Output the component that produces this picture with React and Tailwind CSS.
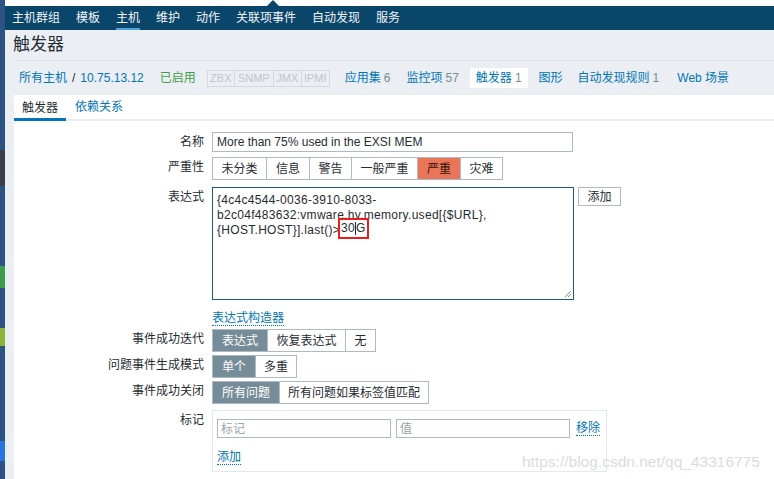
const navItems = ['主机群组', '模板', '主机', '维护', '动作', '关联项事件', '自动发现', '服务'];

function Segmented({ items, active, activeClass = 'bg-[#768d99] text-white' }) {
  return (
    <div className="flex h-[23px]">
      {items.map(([label, w], i) => (
        <div
          key={label}
          style={{ width: w }}
          className={
            'flex items-center justify-center border border-[#acbbc2] text-[12px] ' +
            (i > 0 ? '-ml-px ' : '') +
            (label === active ? activeClass : 'bg-white text-[#1f2c33]')
          }
        >
          {label}
        </div>
      ))}
    </div>
  );
}

function Row({ label, children, className = '' }) {
  return (
    <div className={'flex ' + className}>
      <div className="w-[198px] shrink-0 pr-[8px] text-right text-[12px] text-[#1f2c33] leading-[20px]">{label}</div>
      <div className="flex-1">{children}</div>
    </div>
  );
}

function Link({ children, className = '' }) {
  return (
    <span className={'text-[12px] text-[#0275b8] border-b border-dotted border-[#0275b8] leading-[14px] ' + className}>
      {children}
    </span>
  );
}

export default function App() {
  return (
    <div className="flex w-[774px] h-[479px] overflow-hidden font-['Liberation_Sans','Noto_Sans_CJK_SC',sans-serif]">
      {/* edge of the window behind */}
      <div className="w-[5px] shrink-0 flex flex-col bg-[#2c5384]">
        <div className="h-[150px] shrink-0" />
        <div className="h-[36px] shrink-0 bg-[#3a3f45]" />
        <div className="h-[80px] shrink-0" />
        <div className="h-[22px] shrink-0 bg-[#3f9c4a]" />
        <div className="h-[40px] shrink-0" />
        <div className="h-[18px] shrink-0 bg-[#8eb43a]" />
        <div className="h-[95px] shrink-0" />
        <div className="h-[20px] shrink-0 bg-[#2a74e0]" />
      </div>

      <div className="flex-1 bg-[#ebeef3] relative">
        <div className="h-[6px] bg-white relative">
          <div className="absolute left-[262px] bottom-0 w-0 h-0 border-l-[6px] border-r-[6px] border-b-[6px] border-l-transparent border-r-transparent border-b-[#0a466a]" />
        </div>
        <nav className="h-[24px] bg-[#0a466a] flex items-stretch pl-[7px] gap-[16px]">
          {navItems.map((n) => (
            <div
              key={n}
              className={
                'flex items-center text-[12px] text-[#f2f4f6] ' +
                (n === '主机' ? 'border-b-[2px] border-[#4fa3dc] pt-[2px]' : '')
              }
            >
              {n}
            </div>
          ))}
        </nav>

        <div className="pl-[8px]">
          <div className="h-[31px] flex items-center text-[17px] text-[#1f2c33] border-b border-[#dfe4e7]">触发器</div>
          <div className="h-[34px] flex items-center text-[12px] pl-[6px]">
            <span className="text-[#0275b8]">所有主机</span>
            <span className="text-[#1f2c33] mx-[5px]">/</span>
            <span className="text-[#0275b8]">10.75.13.12</span>
            <span className="text-[#429e47] ml-[16px]">已启用</span>
            <div className="flex ml-[11px] text-[11px] text-[#c0c6cb]">
              {[['ZBX', 28], ['SNMP', 40], ['JMX', 29], ['IPMI', 29]].map(([t, w], i) => (
                <div key={t} style={{ width: w }} className={'h-[17px] flex items-center justify-center border border-[#d5d9dd] ' + (i > 0 ? '-ml-px' : '')}>
                  {t}
                </div>
              ))}
            </div>
            <span className="text-[#0275b8] ml-[15px]">应用集</span>
            <span className="text-[#768d99] ml-[3px]">6</span>
            <span className="text-[#0275b8] ml-[16px]">监控项</span>
            <span className="text-[#768d99] ml-[3px]">57</span>
            <div className="ml-[11px] h-[20px] bg-white px-[6px] flex items-center">
              <span className="text-[#0275b8]">触发器</span>
              <span className="text-[#768d99] ml-[3px]">1</span>
            </div>
            <span className="text-[#0275b8] ml-[11px]">图形</span>
            <span className="text-[#0275b8] ml-[15px]">自动发现规则</span>
            <span className="text-[#768d99] ml-[3px]">1</span>
            <span className="text-[#0275b8] ml-[18px]">Web 场景</span>
          </div>

          <div className="bg-white h-[400px] ml-px">
            <div className="h-[26px] flex border-b-[2px] border-[#ebeef3]">
              <div className="w-[52px] flex items-center justify-center text-[12px] text-[#1f2c33] border-b-[3px] border-[#0275b8] -mb-[2px] pt-[3px]">触发器</div>
              <div className="flex items-center ml-[9px] text-[12px] text-[#0275b8]">依赖关系</div>
            </div>

            <div className="pt-[11px] flex flex-col">
              <Row label="名称">
                <div className="w-[361px] h-[20px] border border-[#acbbc2] flex items-center px-[4px] text-[12px] text-[#1f2c33]">
                  More than 75% used in the EXSI MEM
                </div>
              </Row>

              <Row label="严重性" className="mt-[5px]">
                <Segmented
                  items={[['未分类', 55], ['信息', 44], ['警告', 43], ['一般严重', 67], ['严重', 44], ['灾难', 43]]}
                  active="严重"
                  activeClass="bg-[#e97659] text-[#3a1208]"
                />
              </Row>

              <Row label="表达式" className="mt-[7px]">
                <div className="flex gap-[4px]">
                  <div className="w-[362px] h-[113px] border border-[#1d5a8a] relative px-[4px] pt-[5px] text-[12px] leading-[15px] tracking-[0.3px] text-[#1f2c33]">
                    <div>{'{4c4c4544-0036-3910-8033-'}</div>
                    <div>{'b2c04f483632:vmware.hv.memory.used[{$URL},'}</div>
                    <div className="flex items-center h-[15px]">
                      <span>{'{HOST.HOST}].last()>'}</span>
                      <span className="inline-flex items-center h-[21px] -mt-[5px] -mb-[1px] -ml-[2px] border-[2px] border-[#ee1c1c] px-[1px]">
                        30<span className="w-px h-[13px] bg-[#1f2c33]" />G
                      </span>
                    </div>
                    <svg className="absolute right-[1px] bottom-[1px]" width="8" height="8" viewBox="0 0 8 8">
                      <path d="M7 1L1 7M7 4L4 7" stroke="#8a8a8a" strokeWidth="1" />
                    </svg>
                  </div>
                  <div className="w-[43px] h-[19px] border border-[#acbbc2] flex items-center justify-center text-[12px] text-[#1f2c33]">添加</div>
                </div>
                <div className="mt-[5px] h-[15px]">
                  <Link>表达式构造器</Link>
                </div>
              </Row>

              <Row label="事件成功迭代" className="mt-[9px]">
                <Segmented items={[['表达式', 56], ['恢复表达式', 79], ['无', 31]]} active="表达式" />
              </Row>
              <Row label="问题事件生成模式" className="mt-[3px]">
                <Segmented items={[['单个', 44], ['多重', 42]]} active="单个" />
              </Row>
              <Row label="事件成功关闭" className="mt-[3px]">
                <Segmented items={[['所有问题', 68], ['所有问题如果标签值匹配', 150]]} active="所有问题" />
              </Row>

              <Row label="标记" className="mt-[6px]">
                <div className="w-[395px] h-[62px] border border-[#e3e7ee] px-[4px] pt-[8px]">
                  <div className="flex items-center">
                    <div className="w-[174px] h-[19px] border border-[#acbbc2] flex items-center px-[3px] text-[12px] text-[#9aa3a8]">标记</div>
                    <div className="w-[174px] h-[19px] ml-[5px] border border-[#acbbc2] flex items-center px-[3px] text-[12px] text-[#9aa3a8]">值</div>
                    <Link className="ml-[6px]">移除</Link>
                  </div>
                  <div className="mt-[6px]">
                    <Link>添加</Link>
                  </div>
                </div>
              </Row>
            </div>
          </div>
        </div>

        <div className="absolute left-[517px] top-[450px] text-[15.5px] text-[#dcdcdc]">
          https://blog.csdn.net/qq_43316775
        </div>
      </div>
    </div>
  );
}
